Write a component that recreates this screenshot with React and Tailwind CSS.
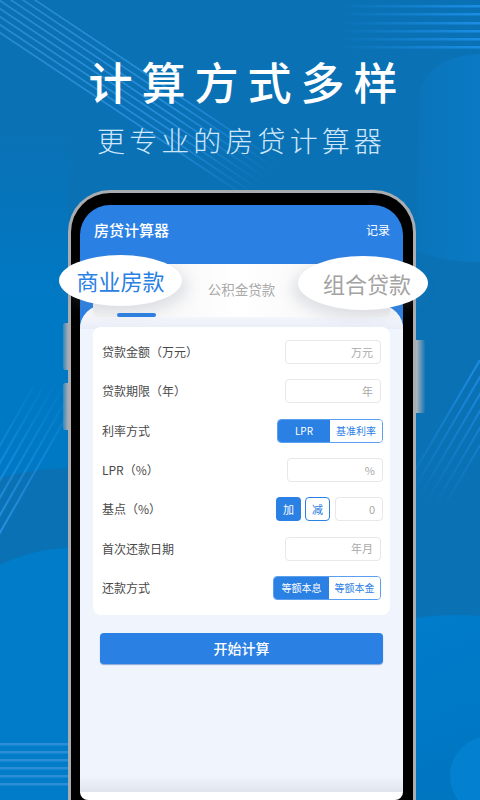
const cjk = "font-['Noto_Sans_CJK_SC','Noto_Sans',sans-serif]";

function Decor() {
  return (
    <svg className="absolute inset-0" width="480" height="800" viewBox="0 0 480 800" fill="none">
      <defs>
        <linearGradient id="tr" x1="340" y1="0" x2="480" y2="0" gradientUnits="userSpaceOnUse">
          <stop offset="0" stopColor="#1c8fe6" stopOpacity="0" />
          <stop offset="1" stopColor="#1c8fe6" stopOpacity="0.95" />
        </linearGradient>
        <linearGradient id="dg" x1="0" y1="0" x2="270" y2="180" gradientUnits="userSpaceOnUse">
          <stop offset="0" stopColor="#4aa3e6" stopOpacity="0.5" />
          <stop offset="0.65" stopColor="#2a93e6" stopOpacity="0.8" />
          <stop offset="1" stopColor="#2a93e6" stopOpacity="0" />
        </linearGradient>
        <linearGradient id="blob" x1="480" y1="60" x2="400" y2="60" gradientUnits="userSpaceOnUse">
          <stop offset="0" stopColor="#0a7ac4" />
          <stop offset="1" stopColor="#0a7ac4" stopOpacity="0.15" />
        </linearGradient>
        <linearGradient id="lb" x1="0" y1="130" x2="0" y2="300" gradientUnits="userSpaceOnUse">
          <stop offset="0" stopColor="#0079c4" stopOpacity="0" />
          <stop offset="1" stopColor="#0079c4" />
        </linearGradient>
        <linearGradient id="rl" x1="480" y1="360" x2="420" y2="500" gradientUnits="userSpaceOnUse">
          <stop offset="0" stopColor="#1c8fe6" stopOpacity="0.95" />
          <stop offset="1" stopColor="#1c8fe6" stopOpacity="0" />
        </linearGradient>
        <linearGradient id="ll" x1="0" y1="540" x2="60" y2="380" gradientUnits="userSpaceOnUse">
          <stop offset="0" stopColor="#2a93e6" stopOpacity="0.95" />
          <stop offset="1" stopColor="#2a93e6" stopOpacity="0" />
        </linearGradient>
        <linearGradient id="br" x1="416" y1="620" x2="480" y2="790" gradientUnits="userSpaceOnUse">
          <stop offset="0" stopColor="#007ccb" />
          <stop offset="1" stopColor="#0075c0" />
        </linearGradient>
      </defs>
      <path d="M0 478 Q35 468 68 468 L68 130 L0 130 Z" fill="url(#lb)" />
      <path d="M0 565 Q32 549 68 548 L68 800 L0 800 Z" fill="#007cc9" />
      <path d="M416 618 Q446 613 480 616 L480 800 L416 800 Z" fill="url(#br)" />
      <path d="M420 90 Q430 56 480 54 L480 262 Q440 262 416 250 Z" fill="url(#blob)" />
      <circle cx="490" cy="776" r="40" fill="#0380d0" />
      {[5, 13, 22, 30, 38, 46].map((y) => (
        <rect key={y} x="340" y={y} width="140" height="2.5" fill="url(#tr)" />
      ))}
      {[0, 1, 2, 3, 4, 5, 6, 7].map((i) => (
        <line key={i} x1={-10} y1={-30 + i * 8} x2={290} y2={170 + i * 8} stroke="url(#dg)" strokeWidth="1.6" />
      ))}
      {[743, 751, 759, 767, 775, 783].map((y) => (
        <rect key={y} x="0" y={y} width="68" height="2.5" fill="#3591d9" fillOpacity="0.85" />
      ))}
      {[0, 1, 2, 3, 4, 5].map((i) => (
        <line key={i} x1={480 + i * 10} y1={360} x2={396 + i * 10} y2={503} stroke="url(#rl)" strokeWidth="2" />
      ))}
      {[0, 1, 2, 3, 4, 5].map((i) => (
        <line key={i} x1={-10 - i * 10} y1={550} x2={85 - i * 10} y2={384} stroke="url(#ll)" strokeWidth="2" />
      ))}
    </svg>
  );
}

function Field({ unit, w = "w-[96px] mr-[2px]" }) {
  return (
    <div className={`${w} h-[24px] rounded-[4px] border border-[#e8e8e8] bg-white flex items-center justify-end pr-[7px] text-[11px] text-[#aaaaaa]`}>
      {unit}
    </div>
  );
}

function Row({ label, children }) {
  return (
    <div className="h-[39.3px] flex items-center justify-between pl-[9px] pr-[7px]">
      <span className="text-[12px] text-[#4a4a4a]">{label}</span>
      {children}
    </div>
  );
}

function Toggle({ a, b, wa, wb, cls = "" }) {
  return (
    <div className={`flex h-[24px] rounded-[4px] border border-[#5b9ff0] overflow-hidden text-[10px] ${cls}`}>
      <div className={`${wa} bg-[#2b80e4] text-white flex items-center justify-center`}>{a}</div>
      <div className={`${wb} bg-white text-[#2b80e4] flex items-center justify-center`}>{b}</div>
    </div>
  );
}

export default function App() {
  return (
    <div className={`relative w-[480px] h-[800px] overflow-hidden bg-[#0073bb] ${cjk}`}>
      <div className="absolute inset-0 bg-[#0a71b5]" />
      <Decor />

      <div className="relative flex flex-col items-center">
        <h1 className="mt-[53px] h-[56px] leading-[56px] text-[44px] tracking-[9px] pl-[15px] font-medium text-white">计算方式多样</h1>
        <p className="mt-[11px] h-[40px] leading-[40px] text-[28px] tracking-[4.1px] pl-[3px] font-light text-[#cfe7fa]">更专业的房贷计算器</p>

        <div className="mt-[30px] ml-[4px] w-[348px] h-[620px] shrink-0 rounded-t-[42px] border-x-[3px] border-t-[3px] border-[#a9acb0] bg-black pt-[12px] pl-[9px] pr-[10px]">
          <div className="relative h-[587px] rounded-t-[30px] bg-[#2b80e4] overflow-hidden">
            <div className="flex items-center justify-between h-[50px] pl-[14px] pr-[13px] text-white">
              <span className="text-[15px] font-medium">房贷计算器</span>
              <span className="text-[12px]">记录</span>
            </div>

            <div className="absolute left-0 right-0 top-[100px] bottom-0 rounded-t-[24px] bg-[#f0f4fc]">
              <div className="absolute left-0 right-0 top-0 h-[24px] rounded-t-[24px] bg-gradient-to-b from-white to-[#e9edf7]" />
              <div className="absolute left-0 right-0 bottom-0 h-[16px] bg-gradient-to-b from-[#f0f4fc] to-[#e0e4ec]" />
            </div>

            <div className="relative mx-[13px] h-[53px] mt-[9px] bg-gradient-to-r from-[#f1f1f1] via-white to-[#f1f1f1] rounded-b-[6px] flex items-end justify-center">
              <span className="mb-[18px] text-[13.5px] text-[#aaaaaa]">公积金贷款</span>
              <div className="absolute left-[24px] bottom-0 w-[39px] h-[4px] rounded-full bg-[#2b80e4]" />
            </div>

            <div className="relative mx-[13px] mt-[10px] h-[288px] rounded-[8px] bg-white pt-[5.5px]">
              <Row label="贷款金额（万元）"><Field unit="万元" /></Row>
              <Row label="贷款期限（年）"><Field unit="年" /></Row>
              <Row label="利率方式"><Toggle a="LPR" b="基准利率" wa="w-[52px]" wb="w-[52px]" /></Row>
              <Row label="LPR（%）"><Field unit="%" w="w-[96px]" /></Row>
              <Row label="基点（%）">
                <div className="flex items-center gap-[4px]">
                  <div className="w-[25px] h-[24px] rounded-[4px] bg-[#2b80e4] text-white text-[11px] flex items-center justify-center">加</div>
                  <div className="w-[25px] h-[24px] rounded-[4px] border border-[#2b80e4] bg-white text-[#2b80e4] text-[11px] flex items-center justify-center">减</div>
                  <Field unit="0" w="w-[48px] ml-[1px]" />
                </div>
              </Row>
              <Row label="首次还款日期"><Field unit="年月" /></Row>
              <Row label="还款方式"><Toggle a="等额本息" b="等额本金" wa="w-[55px]" wb="w-[51px]" cls="mr-[2px]" /></Row>
            </div>

            <div className="relative mx-[20px] mt-[18px] h-[31px] rounded-[4px] bg-[#2b80e4] shadow-[0_1px_1px_rgba(30,90,180,0.5)] text-white text-[14px] font-medium flex items-center justify-center">
              开始计算
            </div>
          </div>
          <div className="h-[8px] bg-white rounded-b-[10px]" />
        </div>
      </div>

      {/* side buttons */}
      <div className="absolute left-[63px] top-[323px] w-[5px] h-[47px] rounded-l-[2px] bg-gradient-to-l from-[#a9acb0] to-[#a9acb044]" />
      <div className="absolute left-[63px] top-[383px] w-[5px] h-[47px] rounded-l-[2px] bg-gradient-to-l from-[#a9acb0] to-[#a9acb044]" />
      <div className="absolute left-[416px] top-[340px] w-[9px] h-[73px] rounded-r-[2px] bg-gradient-to-r from-[#b4b7bb] to-[#b4b7bb11]" />

      {/* floating ovals */}
      <div className="absolute left-[59px] top-[255px] w-[123px] h-[51px] rounded-[50%] bg-white shadow-[6px_6px_14px_rgba(120,130,150,0.2)] flex items-center justify-center text-[22px] text-[#2b80e4]">商业房款</div>
      <div className="absolute left-[298px] top-[256px] w-[130px] h-[54px] rounded-[50%] bg-white shadow-[-6px_6px_14px_rgba(120,130,150,0.2)] flex items-center justify-center pl-[8px] text-[22px] text-[#a3a3a3]">组合贷款</div>
    </div>
  );
}
